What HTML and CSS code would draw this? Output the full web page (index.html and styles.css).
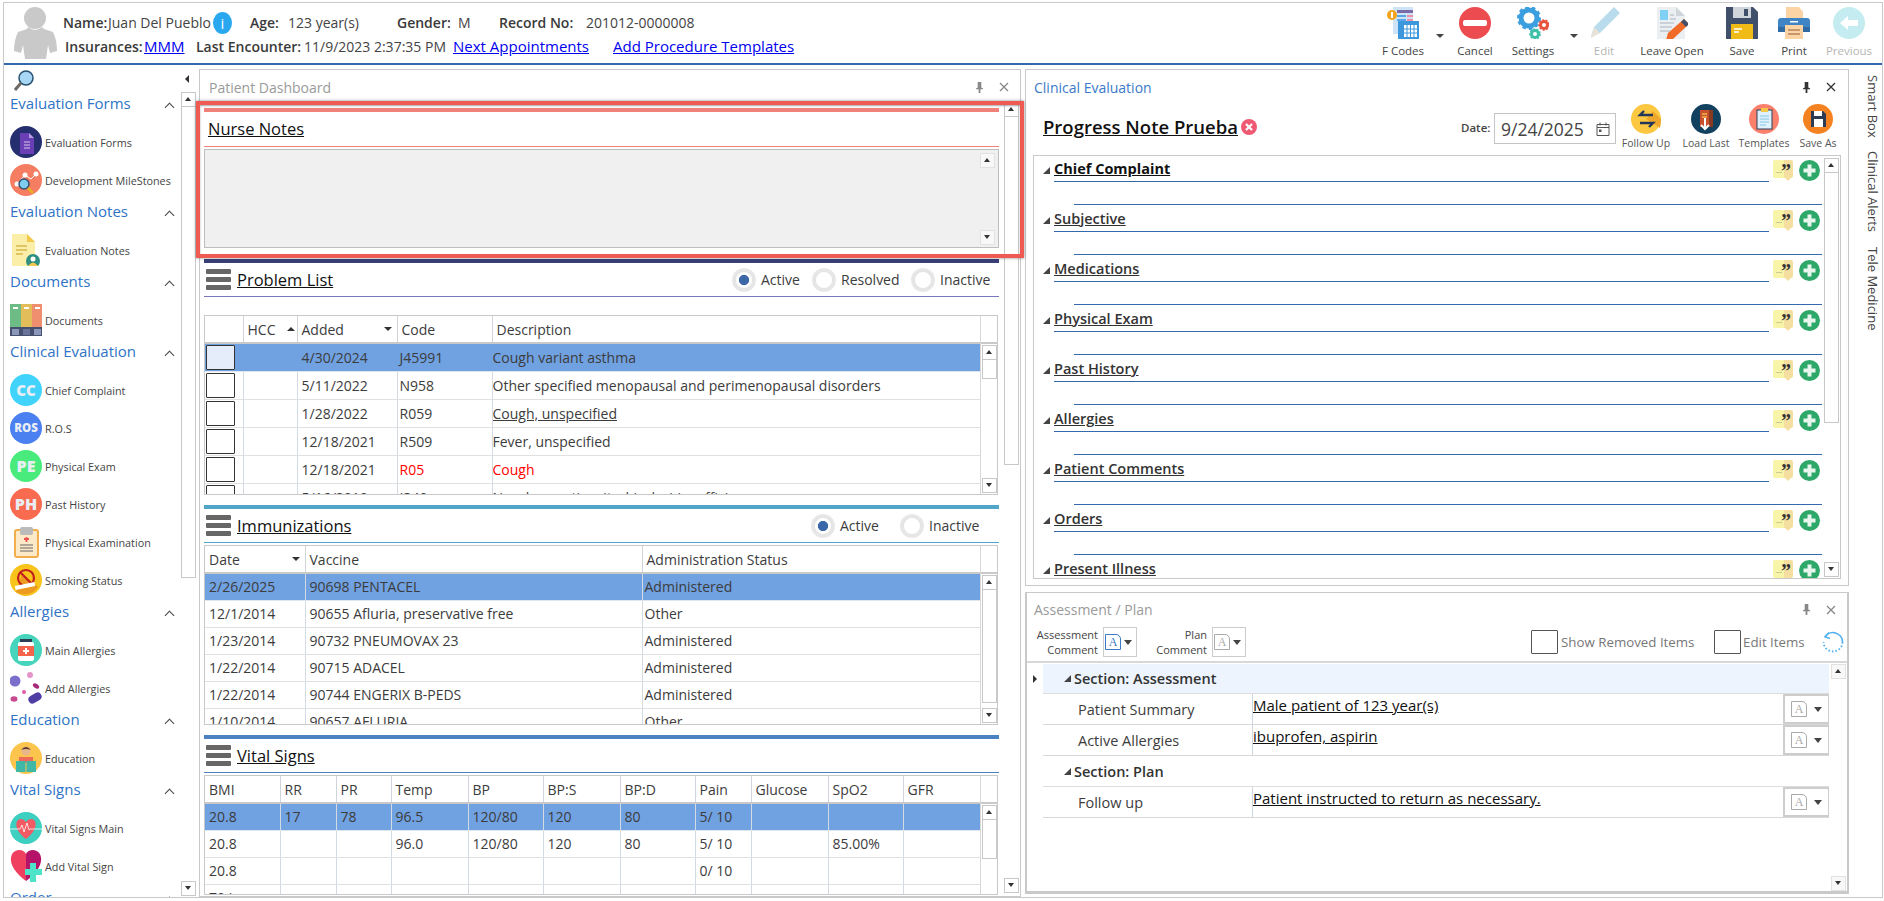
FILE: index.html
```html
<!DOCTYPE html>
<html lang="en">
<head>
<meta charset="utf-8">
<title>Patient Dashboard</title>
<link rel="stylesheet" href="styles.css">
</head>
<body>
<svg class="defs" width="0" height="0">
  <symbol id="i-avatar" viewBox="0 0 44 52"><circle cx="22" cy="11" r="11" fill="#c9c9c9"/><path d="M15 20q7 6 14 0l2 2 9 3q4 8 4 19l-7 2-2-8-2 14H12l-2-14-2 8-7-2q0-11 4-19l9-3z" fill="#c9c9c9"/></symbol>
  <symbol id="i-fcodes" viewBox="0 0 32 32"><rect x="6" y="0" width="20" height="27" fill="#cfe3f7"/><rect x="10" y="3" width="16" height="3" fill="#7a6aa8"/><rect x="10" y="8" width="9" height="2" fill="#5aa6e6"/><rect x="20" y="8" width="6" height="2" fill="#ef8fa8"/><rect x="10" y="12" width="9" height="2" fill="#5aa6e6"/><rect x="20" y="12" width="6" height="2" fill="#ef8fa8"/><rect x="11" y="14" width="21" height="18" fill="#3d97dd"/><rect x="17" y="18" width="13" height="12" fill="#fff"/><path d="M20 18v12M23.500 18v12M27 18v12M17 22h13M17 26h13" stroke="#3d97dd"/><circle cx="5" cy="8" r="5" fill="#f2a51c"/><rect x="4" y="5" width="2" height="6" fill="#fff"/></symbol>
  <symbol id="i-cancel" viewBox="0 0 32 32"><circle cx="16" cy="16" r="16" fill="#ec4b50"/><rect x="4" y="13" width="24" height="6" rx="2" fill="#fff"/></symbol>
  <symbol id="i-settings" viewBox="0 0 32 32"><circle cx="12" cy="11" r="8" fill="none" stroke="#3b9fdf" stroke-width="5"/><circle cx="12" cy="11" r="10.500" fill="none" stroke="#3b9fdf" stroke-width="3" stroke-dasharray="3.500 3"/><circle cx="27" cy="18" r="3.500" fill="none" stroke="#e8543f" stroke-width="3"/><circle cx="27" cy="18" r="5" fill="none" stroke="#e8543f" stroke-width="1.600" stroke-dasharray="2 1.500"/><circle cx="18" cy="27" r="3.500" fill="none" stroke="#3fc0a8" stroke-width="3"/><circle cx="18" cy="27" r="5" fill="none" stroke="#3fc0a8" stroke-width="1.600" stroke-dasharray="2 1.500"/></symbol>
  <symbol id="i-edit" viewBox="0 0 32 32"><path d="M26 0l6 6-20 20-9 3 3-9z" fill="#b9dcec"/><path d="M6 20l6 6-9 5z" fill="#e8e2d8"/></symbol>
  <symbol id="i-leave" viewBox="0 0 32 32"><path d="M1 0h19l9 9v23H1z" fill="#eceff2"/><path d="M20 0l9 9h-9z" fill="#cfd5db"/><rect x="4" y="3" width="8" height="10" fill="#7fd0f5"/><path d="M4 16h14M4 20h12M4 24h10M14 8h4M14 12h6" stroke="#c0c8d0" stroke-width="1.500"/><path d="M28 12l5 5-16 15-7 1 2-7z" fill="#f06a28"/><path d="M28 12l5 5-3 3-5-5z" fill="#44506a"/></symbol>
  <symbol id="i-save" viewBox="0 0 32 32"><path d="M0 0h27l5 5v27H0z" fill="#40506a"/><rect x="7" y="0" width="18" height="11" fill="#cfd5db"/><rect x="18" y="2" width="4" height="7" fill="#40506a"/><rect x="5" y="17" width="22" height="15" fill="#f1bb17"/><path d="M8 22h8M8 25h5" stroke="#fff" stroke-width="1.500"/></symbol>
  <symbol id="i-print" viewBox="0 0 32 32"><path d="M8 0h13l4 5v9H8z" fill="#fbd3a4"/><rect x="0" y="11" width="32" height="14" rx="3" fill="#3f85c5"/><rect x="0" y="20" width="32" height="5" fill="#2f6aa3"/><rect x="7" y="18" width="18" height="14" fill="#fbd3a4"/><path d="M10 23h12M10 27h12" stroke="#b5835a" stroke-width="1.500"/><rect x="12" y="14" width="8" height="1.500" fill="#fff"/></symbol>
  <symbol id="i-prev" viewBox="0 0 32 32"><circle cx="16" cy="16" r="16" fill="#c5ecf0"/><path d="M7 16l8-7v4h10v6H15v4z" fill="#fff"/></symbol>
  <symbol id="i-forms" viewBox="0 0 32 32"><circle cx="16" cy="16" r="16" fill="#252e6e"/><path d="M10 7h9l5 5v16H10z" fill="#6a3fb5"/><path d="M19 7l5 5h-5z" fill="#b79be2"/><path d="M14 16h6M14 19h6M14 22h6" stroke="#d7c9f0"/></symbol>
  <symbol id="i-miles" viewBox="0 0 32 32"><circle cx="16" cy="16" r="16" fill="#f47d62"/><path d="M7 20l8-9 6 4 5-5" stroke="#fff" fill="none"/><circle cx="7" cy="20" r="2.500" fill="#fff"/><circle cx="15" cy="11" r="2.500" fill="#fff"/><circle cx="26" cy="10" r="2.500" fill="#fff"/><circle cx="14" cy="20" r="5" fill="#7ecdf0" stroke="#34506e" stroke-width="1.500"/><path d="M18 24l5 5" stroke="#e8b020" stroke-width="2.500"/></symbol>
  <symbol id="i-note" viewBox="0 0 32 32"><path d="M2 0h15l8 8v24H2z" fill="#fbeea8"/><path d="M17 0l8 8h-8z" fill="#f2c94c"/><path d="M6 12h11M6 16h11M6 20h7" stroke="#d8b84c" stroke-width="1.500"/><circle cx="23" cy="27" r="7" fill="#2f8f83"/><circle cx="23" cy="25" r="2.500" fill="#fff"/><path d="M18 32q5-7 10 0z" fill="#f2c94c"/></symbol>
  <symbol id="i-docs" viewBox="0 0 32 32"><rect x="0" width="11" height="32" fill="#6dbb85"/><rect x="11" width="11" height="32" fill="#e2bd5a"/><rect x="22" width="10" height="32" fill="#ef8f70"/><rect y="23" width="32" height="9" fill="#46506e"/><rect x="2" y="25" width="7" height="6" fill="#8a96ba"/><rect x="13" y="25" width="7" height="6" fill="#68749a"/><rect x="24" y="25" width="7" height="6" fill="#8a96ba"/><path d="M3 4h5M14 4h5M25 4h5" stroke="#fff" stroke-width="2"/></symbol>
  <symbol id="i-clip" viewBox="0 0 32 32"><rect x="5" y="4" width="23" height="27" rx="2" fill="#fce9c8" stroke="#f2ae4c" stroke-width="2"/><rect x="10" y="1" width="13" height="8" rx="2" fill="#bbb"/><path d="M14 13h5M16.500 11v5" stroke="#ee5050" stroke-width="1.800"/><path d="M10 19h13M10 22h13M10 25h13" stroke="#666" stroke-width="1.200"/></symbol>
  <symbol id="i-smoke" viewBox="0 0 32 32"><circle cx="16" cy="16" r="16" fill="#f8c41c"/><path d="M6 28a16 16 0 0 0 22-5L12 10z" fill="#ec9a20"/><circle cx="16" cy="14" r="8" fill="none" stroke="#c21e1e" stroke-width="2.200"/><path d="M10 8l12 12" stroke="#c21e1e" stroke-width="2.200"/><rect x="5" y="20" width="20" height="4" fill="#fff" transform="rotate(-12 15 22)"/></symbol>
  <symbol id="i-bottle" viewBox="0 0 32 32"><circle cx="16" cy="16" r="16" fill="#46d4bc"/><rect x="10" y="5" width="12" height="3" fill="#2b3d52"/><rect x="8" y="8" width="16" height="19" rx="2" fill="#fff"/><rect x="8" y="12" width="16" height="10" fill="#f4634c"/><path d="M13 17h6M16 14v6" stroke="#fff" stroke-width="2"/></symbol>
  <symbol id="i-pills" viewBox="0 0 32 32"><circle cx="5" cy="9" r="5.500" fill="#7a70cc"/><circle cx="20" cy="3" r="3" fill="#e596c8"/><ellipse cx="26" cy="14" rx="3.500" ry="2.200" fill="#a82a7a" transform="rotate(35 26 14)"/><circle cx="14" cy="20" r="2" fill="#e05aa8"/><ellipse cx="4" cy="27" rx="3.500" ry="2.800" fill="#c84a90"/><rect x="18" y="22" width="14" height="8" rx="4" fill="#4f3fa5" transform="rotate(-30 25 26)"/></symbol>
  <symbol id="i-edu" viewBox="0 0 32 32"><circle cx="16" cy="16" r="16" fill="#fbc44c"/><circle cx="16" cy="9" r="4.500" fill="#e8b58c"/><path d="M11 8q5-6 10 0-5-2-10 0z" fill="#5a3a28"/><path d="M9 15h14v6H9z" fill="#ee6a58"/><rect x="6" y="19" width="9.500" height="11" fill="#3fb8a8"/><rect x="16.500" y="19" width="9.500" height="11" fill="#3fb8a8"/></symbol>
  <symbol id="i-vital" viewBox="0 0 32 32"><circle cx="16" cy="16" r="16" fill="#3dcfc0"/><path d="M16 27C3 17 5 7 11 7q3 0 5 3 2-3 5-3c6 0 8 10-5 20z" fill="#f25a64"/><path d="M0 17h10l2-4 2 7 3-9 2 7 1-1h12" stroke="#fff" stroke-width=".8" fill="none"/></symbol>
  <symbol id="i-heart" viewBox="0 0 32 32"><path d="M16 31C-6 15 0 0 9 0q5 0 7 4v27z" fill="#f0405f"/><path d="M16 31C38 15 32 0 23 0q-5 0-7 4z" fill="#b5126a"/><rect x="20" y="13" width="6" height="19" fill="#4fe3c9"/><rect x="15" y="19" width="17" height="6" fill="#4fe3c9"/></symbol>
  <symbol id="i-lens" viewBox="0 0 20 22"><circle cx="12" cy="8" r="7" fill="#a8d6f5" stroke="#26506e" stroke-width="1.500"/><path d="M7 13l-6 7" stroke="#6e6a64" stroke-width="3"/></symbol>
  <symbol id="i-menu" viewBox="0 0 25 21"><rect width="25" height="5" rx="1" fill="#666"/><rect y="8" width="25" height="5" rx="1" fill="#666"/><rect y="16" width="25" height="5" rx="1" fill="#666"/></symbol>
  <symbol id="i-pin" viewBox="0 0 10 12"><path d="M3 0h4v6l2 1v1H6v4H4V8H1V7l2-1z" fill="currentColor"/></symbol>
  <symbol id="i-close" viewBox="0 0 10 10"><path d="M1 1l8 8M9 1L1 9" stroke="currentColor" stroke-width="1.300"/></symbol>
  <symbol id="i-x" viewBox="0 0 16 16"><circle cx="8" cy="8" r="8" fill="#ef5a72"/><path d="M5 5l6 6M11 5l-6 6" stroke="#fff" stroke-width="2.200"/></symbol>
  <symbol id="i-cal" viewBox="0 0 14 14"><path d="M1 2.500h12v11H1zM1 5.500h12M4 .5v3M10 .5v3" stroke="#555" fill="none"/><rect x="3" y="7.500" width="2.500" height="2.500" fill="#555"/></symbol>
  <symbol id="i-follow" viewBox="0 0 30 30"><circle cx="15" cy="15" r="15" fill="#fcc741"/><path d="M15 15l14 9q1-4 1-9l-8-8z" fill="#f0a82c"/><path d="M22 11H9l4-4M9 19h13l-4 4" stroke="#24395a" stroke-width="2.400" fill="none"/></symbol>
  <symbol id="i-load" viewBox="0 0 30 30"><circle cx="15" cy="15" r="15" fill="#12405f"/><rect x="9" y="6" width="13" height="17" fill="#c8502c"/><rect x="18" y="6" width="4" height="17" fill="#8a3a20"/><path d="M11 10h5M11 13h5" stroke="#f2b84c" stroke-width="1.500"/><path d="M14 14v11M10 21l4 4 4-4" stroke="#fff" stroke-width="2" fill="none"/></symbol>
  <symbol id="i-templates" viewBox="0 0 30 30"><circle cx="15" cy="15" r="15" fill="#fa806c"/><rect x="8" y="6" width="15" height="19" fill="#dff1fb" stroke="#2b3f5a"/><rect x="12" y="4" width="7" height="4" fill="#f6c64a"/><path d="M11 12h9M11 15h9M11 18h9M11 21h6" stroke="#8ac4e8"/></symbol>
  <symbol id="i-saveas" viewBox="0 0 30 30"><circle cx="15" cy="15" r="15" fill="#f58220"/><path d="M8 7h12l3 3v13H8z" fill="#2b3b55"/><rect x="11" y="7" width="8" height="5" fill="#fff"/><rect x="11" y="15" width="9" height="8" fill="#fff"/></symbol>
  <symbol id="i-plus" viewBox="0 0 21 21"><circle cx="10.500" cy="10.500" r="10.500" fill="#2da868"/><path d="M10.500 4.500v12M4.500 10.500h12" stroke="#e8f6ee" stroke-width="4"/></symbol>
  <symbol id="i-refresh" viewBox="0 0 22 22"><path d="M3 6A9.500 9.500 0 0 1 20.500 11" fill="none" stroke="#4fb0f0" stroke-width="1.600"/><path d="M20.500 11A9.500 9.500 0 0 1 1.500 11" fill="none" stroke="#4fb0f0" stroke-width="1.800" stroke-dasharray="1.600 2"/><path d="M7 1.500L3 6l5 1.500" fill="none" stroke="#4fb0f0" stroke-width="1.400"/></symbol>
</svg>

<div class="app">
  <header class="topbar">
    <svg class="avatar"><use href="#i-avatar"/></svg>
    <div class="patient">
      <div class="pline pline-one">
        <div class="cell c-name"><b class="lb lb-name">Name:</b><span>Juan Del Pueblo</span><span class="info">i</span></div>
        <div class="cell c-age"><b class="lb lb-age">Age:</b><span>123 year(s)</span></div>
        <div class="cell c-gender"><b class="lb lb-gender">Gender:</b><span>M</span></div>
        <div class="cell c-record"><b class="lb lb-record">Record No:</b><span>201012-0000008</span></div>
      </div>
      <div class="pline">
        <div class="cell c-ins"><b class="lb lb-ins">Insurances:</b><a href="#">MMM</a></div>
        <div class="cell c-last"><b class="lb lb-last">Last Encounter:</b><span>11/9/2023 2:37:35 PM</span></div>
        <div class="cell c-next"><a href="#">Next Appointments</a></div>
        <div class="cell"><a href="#">Add Procedure Templates</a></div>
      </div>
    </div>
    <nav class="tools">
      <div class="tool w56"><svg class="ti"><use href="#i-fcodes"/></svg><span>F Codes</span></div>
      <div class="tcaret w18"></div>
      <div class="tool w52"><svg class="ti"><use href="#i-cancel"/></svg><span>Cancel</span></div>
      <div class="tool w64"><svg class="ti"><use href="#i-settings"/></svg><span>Settings</span></div>
      <div class="tcaret w16"></div>
      <div class="tool w46 off"><svg class="ti"><use href="#i-edit"/></svg><span>Edit</span></div>
      <div class="tool w90"><svg class="ti"><use href="#i-leave"/></svg><span>Leave Open</span></div>
      <div class="tool w50"><svg class="ti"><use href="#i-save"/></svg><span>Save</span></div>
      <div class="tool w54"><svg class="ti"><use href="#i-print"/></svg><span>Print</span></div>
      <div class="tool w56 off"><svg class="ti"><use href="#i-prev"/></svg><span>Previous</span></div>
    </nav>
  </header>

  <main class="workspace">
    <aside class="sidebar">
      <div class="side-list">
        <svg class="lens"><use href="#i-lens"/></svg>
        <div class="s-title">Evaluation Forms</div>
        <div class="s-item"><svg class="s-ic"><use href="#i-forms"/></svg>Evaluation Forms</div>
        <div class="s-item"><svg class="s-ic"><use href="#i-miles"/></svg>Development MileStones</div>
        <div class="s-title">Evaluation Notes</div>
        <div class="s-item"><svg class="s-ic"><use href="#i-note"/></svg>Evaluation Notes</div>
        <div class="s-title">Documents</div>
        <div class="s-item"><svg class="s-ic"><use href="#i-docs"/></svg>Documents</div>
        <div class="s-title">Clinical Evaluation</div>
        <div class="s-item"><span class="badge b-cc">CC</span>Chief Complaint</div>
        <div class="s-item"><span class="badge b-ros">ROS</span>R.O.S</div>
        <div class="s-item"><span class="badge b-pe">PE</span>Physical Exam</div>
        <div class="s-item"><span class="badge b-ph">PH</span>Past History</div>
        <div class="s-item"><svg class="s-ic"><use href="#i-clip"/></svg>Physical Examination</div>
        <div class="s-item"><svg class="s-ic"><use href="#i-smoke"/></svg>Smoking Status</div>
        <div class="s-title">Allergies</div>
        <div class="s-item"><svg class="s-ic"><use href="#i-bottle"/></svg>Main Allergies</div>
        <div class="s-item"><svg class="s-ic"><use href="#i-pills"/></svg>Add Allergies</div>
        <div class="s-title">Education</div>
        <div class="s-item"><svg class="s-ic"><use href="#i-edu"/></svg>Education</div>
        <div class="s-title">Vital Signs</div>
        <div class="s-item"><svg class="s-ic"><use href="#i-vital"/></svg>Vital Signs Main</div>
        <div class="s-item"><svg class="s-ic"><use href="#i-heart"/></svg>Add Vital Sign</div>
        <div class="s-title">Order</div>
      </div>
      <div class="side-rail">
        <div class="collapse"></div>
        <div class="sb sb-side"><div class="sb-btn up"></div><div class="sb-thumb th-side"></div><div class="sb-gap"></div><div class="sb-btn down"></div></div>
      </div>
    </aside>

    <section class="panel dash">
      <div class="p-head muted"><span class="p-title">Patient Dashboard</span><svg class="pin"><use href="#i-pin"/></svg><svg class="close"><use href="#i-close"/></svg></div>
      <div class="dash-body">
        <div class="dash-content">
          <div class="nurse">
            <div class="nurse-bar"></div>
            <div class="nurse-head"><u>Nurse Notes</u></div>
            <div class="nurse-box"><div class="sb sb-nurse"><div class="sb-btn up"></div><div class="sb-gap"></div><div class="sb-btn down"></div></div></div>
          </div>

          <div class="bar bar-navy"></div>
          <div class="sec-head line-purple">
            <svg class="menu"><use href="#i-menu"/></svg><u class="sec-name">Problem List</u>
            <div class="radios">
              <div class="radio-item ri80"><i class="radio on"></i>Active</div>
              <div class="radio-item ri99"><i class="radio"></i>Resolved</div>
              <div class="radio-item ri88"><i class="radio"></i>Inactive</div>
            </div>
          </div>
          <div class="grid g-problem">
            <div class="g-main">
              <table class="dt rows28">
                <colgroup><col class="w38"><col class="w54"><col class="w100"><col class="w95"><col></colgroup>
                <thead><tr><th></th><th><span class="th-sort">HCC<i class="tri-up"></i></span></th><th><span class="th-sort wide">Added<i class="tri-down"></i></span></th><th>Code</th><th>Description</th></tr></thead>
                <tbody>
                  <tr class="sel"><td class="chk"><i class="box focus"></i></td><td></td><td>4/30/2024</td><td class="tight">J45991</td><td class="flush">Cough variant asthma</td></tr>
                  <tr><td class="chk"><i class="box"></i></td><td></td><td>5/11/2022</td><td class="tight">N958</td><td class="flush">Other specified menopausal and perimenopausal disorders</td></tr>
                  <tr><td class="chk"><i class="box"></i></td><td></td><td>1/28/2022</td><td class="tight">R059</td><td class="flush"><u>Cough, unspecified</u></td></tr>
                  <tr><td class="chk"><i class="box"></i></td><td></td><td>12/18/2021</td><td class="tight">R509</td><td class="flush">Fever, unspecified</td></tr>
                  <tr class="red"><td class="chk"><i class="box"></i></td><td></td><td class="ink">12/18/2021</td><td class="tight">R05</td><td class="flush">Cough</td></tr>
                  <tr><td class="chk"><i class="box"></i></td><td></td><td>5/16/2019</td><td class="tight">I340</td><td class="flush">Nonrheumatic mitral (valve) insufficiency</td></tr>
                </tbody>
              </table>
            </div>
            <div class="g-side"><div class="sb sb-grid"><div class="sb-btn up"></div><div class="sb-thumb th-problem"></div><div class="sb-gap"></div><div class="sb-btn down"></div></div></div>
          </div>

          <div class="bar bar-teal"></div>
          <div class="sec-head line-teal">
            <svg class="menu"><use href="#i-menu"/></svg><u class="sec-name">Immunizations</u>
            <div class="radios">
              <div class="radio-item ri89"><i class="radio on"></i>Active</div>
              <div class="radio-item ri99"><i class="radio"></i>Inactive</div>
            </div>
          </div>
          <div class="grid g-imm">
            <div class="g-main">
              <table class="dt rows27">
                <colgroup><col class="w100"><col class="w337"><col></colgroup>
                <thead><tr><th><span class="th-sort wide">Date<i class="tri-down"></i></span></th><th>Vaccine</th><th>Administration Status</th></tr></thead>
                <tbody>
                  <tr class="sel"><td>2/26/2025</td><td>90698 PENTACEL</td><td class="tight">Administered</td></tr>
                  <tr><td>12/1/2014</td><td>90655 Afluria, preservative free</td><td class="tight">Other</td></tr>
                  <tr><td>1/23/2014</td><td>90732 PNEUMOVAX 23</td><td class="tight">Administered</td></tr>
                  <tr><td>1/22/2014</td><td>90715 ADACEL</td><td class="tight">Administered</td></tr>
                  <tr><td>1/22/2014</td><td>90744 ENGERIX B-PEDS</td><td class="tight">Administered</td></tr>
                  <tr><td>1/10/2014</td><td>90657 AFLURIA</td><td class="tight">Other</td></tr>
                </tbody>
              </table>
            </div>
            <div class="g-side"><div class="sb sb-grid"><div class="sb-btn up"></div><div class="sb-thumb th-imm"></div><div class="sb-gap"></div><div class="sb-btn down"></div></div></div>
          </div>

          <div class="bar bar-blue"></div>
          <div class="sec-head line-blue">
            <svg class="menu"><use href="#i-menu"/></svg><u class="sec-name">Vital Signs</u>
          </div>
          <div class="grid g-vital">
            <div class="g-main">
              <table class="dt rows27">
                <colgroup><col class="w75"><col class="w56"><col class="w55"><col class="w77"><col class="w75"><col class="w77"><col class="w75"><col class="w56"><col class="w77"><col class="w75"><col></colgroup>
                <thead><tr><th>BMI</th><th>RR</th><th>PR</th><th>Temp</th><th>BP</th><th>BP:S</th><th>BP:D</th><th>Pain</th><th>Glucose</th><th>SpO2</th><th>GFR</th></tr></thead>
                <tbody>
                  <tr class="sel"><td>20.8</td><td>17</td><td>78</td><td>96.5</td><td>120/80</td><td>120</td><td>80</td><td>5/ 10</td><td></td><td></td><td></td></tr>
                  <tr><td>20.8</td><td></td><td></td><td>96.0</td><td>120/80</td><td>120</td><td>80</td><td>5/ 10</td><td></td><td>85.00%</td><td></td></tr>
                  <tr><td>20.8</td><td></td><td></td><td></td><td></td><td></td><td></td><td>0/ 10</td><td></td><td></td><td></td></tr>
                  <tr><td>70 in</td><td></td><td></td><td></td><td></td><td></td><td></td><td></td><td></td><td></td><td></td></tr>
                </tbody>
              </table>
            </div>
            <div class="g-side g-side-open"><div class="sb sb-vital"><div class="sb-btn up"></div><div class="sb-thumb th-vital"></div></div></div>
          </div>
        </div>
        <div class="dash-rail"><div class="sb sb-dash"><div class="sb-btn up"></div><div class="sb-thumb th-dash"></div><div class="sb-gap"></div><div class="sb-btn down"></div></div></div>
      </div>
    </section>

    <div class="right-col">
      <section class="panel clinical">
        <div class="p-head"><span class="p-title blue">Clinical Evaluation</span><svg class="pin"><use href="#i-pin"/></svg><svg class="close"><use href="#i-close"/></svg></div>
        <div class="note-row">
          <u class="note-name">Progress Note Prueba</u><svg class="note-x"><use href="#i-x"/></svg>
          <b class="date-lb">Date:</b>
          <div class="date-box"><span>9/24/2025</span><svg class="cal"><use href="#i-cal"/></svg></div>
          <div class="nbtn n1"><svg class="ni"><use href="#i-follow"/></svg><span>Follow Up</span></div>
          <div class="nbtn n2"><svg class="ni"><use href="#i-load"/></svg><span>Load Last</span></div>
          <div class="nbtn n3"><svg class="ni"><use href="#i-templates"/></svg><span>Templates</span></div>
          <div class="nbtn n4"><svg class="ni"><use href="#i-saveas"/></svg><span>Save As</span></div>
        </div>
        <div class="eval-list">
          <div class="eval-items">
            <div class="ev"><div class="ev-head"><i class="tri-open"></i><div class="ev-name strong"><u>Chief Complaint</u></div><span class="q"><i>...</i>”</span><svg class="plus"><use href="#i-plus"/></svg></div><div class="ev-body"></div></div>
            <div class="ev"><div class="ev-head"><i class="tri-open"></i><div class="ev-name"><u>Subjective</u></div><span class="q"><i>...</i>”</span><svg class="plus"><use href="#i-plus"/></svg></div><div class="ev-body"></div></div>
            <div class="ev"><div class="ev-head"><i class="tri-open"></i><div class="ev-name"><u>Medications</u></div><span class="q"><i>...</i>”</span><svg class="plus"><use href="#i-plus"/></svg></div><div class="ev-body"></div></div>
            <div class="ev"><div class="ev-head"><i class="tri-open"></i><div class="ev-name"><u>Physical Exam</u></div><span class="q"><i>...</i>”</span><svg class="plus"><use href="#i-plus"/></svg></div><div class="ev-body"></div></div>
            <div class="ev"><div class="ev-head"><i class="tri-open"></i><div class="ev-name"><u>Past History</u></div><span class="q"><i>...</i>”</span><svg class="plus"><use href="#i-plus"/></svg></div><div class="ev-body"></div></div>
            <div class="ev"><div class="ev-head"><i class="tri-open"></i><div class="ev-name"><u>Allergies</u></div><span class="q"><i>...</i>”</span><svg class="plus"><use href="#i-plus"/></svg></div><div class="ev-body"></div></div>
            <div class="ev"><div class="ev-head"><i class="tri-open"></i><div class="ev-name"><u>Patient Comments</u></div><span class="q"><i>...</i>”</span><svg class="plus"><use href="#i-plus"/></svg></div><div class="ev-body"></div></div>
            <div class="ev"><div class="ev-head"><i class="tri-open"></i><div class="ev-name"><u>Orders</u></div><span class="q"><i>...</i>”</span><svg class="plus"><use href="#i-plus"/></svg></div><div class="ev-body"></div></div>
            <div class="ev"><div class="ev-head"><i class="tri-open"></i><div class="ev-name"><u>Present Illness</u></div><span class="q"><i>...</i>”</span><svg class="plus"><use href="#i-plus"/></svg></div><div class="ev-body"></div></div>
          </div>
          <div class="sb sb-eval"><div class="sb-btn up"></div><div class="sb-thumb th-eval"></div><div class="sb-gap"></div><div class="sb-btn down"></div></div>
        </div>
      </section>

      <section class="panel assess">
        <div class="p-head muted"><span class="p-title">Assessment / Plan</span><svg class="pin"><use href="#i-pin"/></svg><svg class="close"><use href="#i-close"/></svg></div>
        <div class="a-tools">
          <div class="a-lb lb1">Assessment<br>Comment</div>
          <div class="a-drop active"><span class="a-ic">A</span><i class="caret"></i></div>
          <div class="a-lb lb2">Plan<br>Comment</div>
          <div class="a-drop"><span class="a-ic">A</span><i class="caret"></i></div>
          <i class="box big b1"></i><span class="a-chk l1">Show Removed Items</span>
          <i class="box big"></i><span class="a-chk l2">Edit Items</span>
          <svg class="refresh"><use href="#i-refresh"/></svg>
        </div>
        <div class="a-grid">
          <div class="a-exp"><i class="tri-right"></i></div>
          <div class="a-rows">
            <div class="a-sec tint"><i class="tri-open"></i>Section: Assessment</div>
            <div class="a-row inset"><div class="a-name">Patient Summary</div><div class="a-val"><u>Male patient of 123 year(s)</u></div><div class="a-cmt"><span class="a-ic">A</span><i class="caret"></i></div></div>
            <div class="a-row"><div class="a-name">Active Allergies</div><div class="a-val"><u>ibuprofen, aspirin</u></div><div class="a-cmt"><span class="a-ic">A</span><i class="caret"></i></div></div>
            <div class="a-sec"><i class="tri-open"></i>Section: Plan</div>
            <div class="a-row"><div class="a-name">Follow up</div><div class="a-val"><u>Patient instructed to return as necessary.</u></div><div class="a-cmt"><span class="a-ic">A</span><i class="caret"></i></div></div>
          </div>
          <div class="sb sb-assess"><div class="sb-btn up"></div><div class="sb-gap"></div><div class="sb-btn down"></div></div>
        </div>
      </section>
    </div>

    <div class="vtabs">
      <div class="vtab t1">Smart Box</div>
      <div class="vtab t2">Clinical Alerts</div>
      <div class="vtab">Tele Medicine</div>
    </div>
  </main>
</div>
</body>
</html>
```

FILE: styles.css
```css
* { box-sizing: border-box; }
html, body { margin: 0; padding: 0; background: #fff; }
body { font-family: "Open Sans", "Liberation Sans", sans-serif; color: #3c3c3c; font-size: 14px; overflow: hidden; }
.defs { position: absolute; }
svg { display: block; flex: none; }

.app { width: 1880px; height: 896px; margin: 2px 0 0 3px; border: 1px solid #c9c9c9; display: flex; flex-direction: column; overflow: hidden; }

/* header */
.topbar { height: 62px; flex: none; display: flex; border-bottom: 2px solid #3569ad; }
.avatar { width: 44px; height: 52px; margin: 4px 0 0 9px; }
.patient { margin-left: 6px; padding-top: 8px; font-size: 14px; }
.pline { display: flex; align-items: center; height: 24px; white-space: nowrap; color: #444; }
.pline-one { height: 23px; }
.cell { display: flex; align-items: center; }
.lb { font-weight: 600; color: #3a3a3a; }
.lb-name { width: 45px; }
.lb-age { width: 38px; }
.lb-gender { width: 61px; }
.lb-record { width: 87px; }
.lb-ins { width: 79px; margin-left: 2px; }
.lb-last { width: 108px; }
.c-name { width: 187px; }
.c-age { width: 147px; }
.c-gender { width: 102px; }
.c-ins { width: 133px; }
.c-last { width: 257px; }
.c-next { width: 160px; }
.pline a { color: #0000ee; text-decoration: underline; font-size: 15px; }
.info { width: 19px; height: 22px; border-radius: 50%; background: #2aa8ef; color: #fff; font-size: 15px; line-height: 22px; text-align: center; margin-left: 2px; }

.tools { margin-left: auto; display: flex; padding-right: 5px; }
.tool { display: flex; flex-direction: column; align-items: center; padding-top: 4px; font-size: 11.500px; color: #444; white-space: nowrap; }
.tool span { margin-top: 4px; line-height: 16px; }
.tool.off { color: #b5b5b5; }
.ti { width: 32px; height: 32px; }
.tcaret { position: relative; }
.tcaret::after { content: ""; position: absolute; left: 5px; top: 31px; border: 4px solid transparent; border-top: 4px solid #444; }
.w18 { width: 18px; } .w16 { width: 16px; } .w38 { width: 38px; } .w46 { width: 46px; } .w50 { width: 50px; }
.w52 { width: 52px; } .w54 { width: 54px; } .w55 { width: 55px; } .w56 { width: 56px; } .w64 { width: 64px; }
.w75 { width: 75px; } .w77 { width: 77px; } .w90 { width: 90px; } .w95 { width: 95px; } .w100 { width: 100px; } .w337 { width: 337px; }

/* layout */
.workspace { flex: 1; display: flex; min-height: 0; }

/* sidebar */
.sidebar { width: 195px; flex: none; display: flex; }
.side-list { width: 177px; height: 100%; overflow: hidden; padding: 5px 0 0 6px; flex: none; }
.lens { width: 20px; height: 22px; margin-left: 4px; margin-bottom: 2px; }
.s-title { height: 32px; line-height: 18px; font-size: 15px; color: #2e73c6; position: relative; white-space: nowrap; }
.s-title::after { content: ""; position: absolute; left: 156px; top: 10px; width: 6px; height: 6px; border-left: 1.500px solid #444; border-top: 1.500px solid #444; transform: rotate(45deg); }
.s-item { height: 38px; display: flex; gap: 3px; font-size: 10.800px; line-height: 34px; white-space: nowrap; color: #444; }
.s-ic { width: 32px; height: 32px; }
.badge { width: 32px; height: 32px; border-radius: 50%; flex: none; text-align: center; color: #e8eef4; font-weight: 800; line-height: 32px; font-size: 16px; }
.b-cc { background: #41d3fb; font-size: 15px; }
.b-ros { background: #4a80f0; font-size: 11.500px; }
.b-pe { background: #49ec7c; }
.b-ph { background: #f96b50; }
.side-rail { width: 18px; display: flex; flex-direction: column; }
.collapse { height: 27px; position: relative; flex: none; }
.collapse::after { content: ""; position: absolute; left: 4px; top: 10px; border: 4px solid transparent; border-right: 4px solid #333; border-left-width: 0; }

/* scrollbars */
.sb { width: 15px; display: flex; flex-direction: column; flex: none; }
.sb-btn { height: 15px; flex: none; border: 1px solid #c8c8c8; background: #fff; position: relative; }
.sb-btn::after { content: ""; position: absolute; left: 3px; border: 3.500px solid transparent; }
.sb-btn.up::after { top: 1px; border-bottom: 4px solid #333; }
.sb-btn.down::after { top: 4px; border-top: 4px solid #333; }
.sb-thumb { border: 1px solid #c8c8c8; border-top: 0; flex: none; background: #fff; }
.sb-gap { flex: 1; }
.sb-side { height: 804px; }
.th-side { height: 471px; }
.sb-nurse { height: 92px; margin: 3px 3px 0 auto; }
.sb-nurse .sb-btn, .sb-assess .sb-btn { border-color: #e2e2e2; background: #f8f8f8; }
.sb-grid { height: 148px; }
.th-problem { height: 19px; }
.th-imm { height: 113px; }
.th-vital { height: 39px; }
.th-eval { height: 250px; }

/* panels */
.panel { border: 1px solid #c9c9c9; background: #fff; }
.p-head { height: 31px; display: flex; align-items: center; padding: 3px 12px 0 8px; color: #333; }
.p-head.muted { color: #888; }
.p-title { font-size: 14px; color: #9a9a9a; margin-right: auto; }
.p-title.blue { color: #3a7ac8; }
.pin { width: 9px; height: 11px; margin-right: 15px; }
.close { width: 10px; height: 10px; }

.dash { width: 822px; height: 828px; margin-top: 4px; flex: none; display: flex; flex-direction: column; }
.dash .p-head { padding: 3px 11px 0 9px; }
.dash-body { flex: 1; display: flex; padding-left: 4px; min-height: 0; }
.dash-content { width: 795px; flex: none; }
.dash-rail { margin-left: 5px; padding-top: 1px; }
.sb-dash { height: 791px; }
.th-dash { height: 348px; }

.nurse { position: relative; z-index: 2; height: 157px; margin: 0 -25px 1px -8px; border: 4px solid #ef5b52; padding: 0 21px 0 4px; box-shadow: 0 0 3px rgba(0, 0, 0, .45), inset 0 1px 2px rgba(0, 0, 0, .35); }
.nurse-bar { height: 4px; margin-top: 3px; background: #f0807a; }
.nurse-head { height: 35px; line-height: 33px; padding-left: 4px; font-size: 16.500px; color: #111; border-bottom: 1px solid #f0807a; }
.nurse-box { height: 99px; margin-top: 2px; background: #f0f0f0; border: 1px solid #bdbdbd; display: flex; }

.bar { height: 4px; }
.bar-navy { background: #3a3f78; }
.bar-teal { background: #51a5c9; margin-top: 10px; }
.bar-blue { background: #4d82c2; margin-top: 10px; }
.sec-head { height: 34px; display: flex; align-items: center; border-bottom: 1px solid; padding-left: 2px; font-size: 14px; white-space: nowrap; }
.line-purple { border-color: #7a78bb; }
.line-teal { border-color: #51a5c9; }
.line-blue { border-color: #4d82c2; }
.menu { width: 25px; height: 21px; }
.sec-name { margin-left: 6px; font-size: 16.500px; color: #111; }
.radios { margin-left: auto; display: flex; }
.radio-item { display: flex; align-items: center; gap: 5px; }
.ri80 { width: 80px; } .ri88 { width: 88px; } .ri89 { width: 89px; } .ri99 { width: 99px; }
.radio { width: 24px; height: 24px; border-radius: 50%; background: radial-gradient(circle, #fff 0 44%, #e4e4e4 50%, #efefef 100%); position: relative; flex: none; }
.radio.on { background: radial-gradient(circle, #3a68a8 0 28%, #fff 32% 44%, #e4e4e4 50%, #efefef 100%); }

/* grids */
.grid { display: flex; width: 794px; height: 180px; border: 1px solid #c9c9c9; overflow: hidden; }
.g-problem { margin-top: 18px; }
.g-imm { margin-top: 2px; }
.g-vital { margin-top: 2px; height: 120px; }
.g-main { width: 775px; flex: none; overflow: hidden; height: 100%; }
.g-side { flex: 1; border-left: 1px solid #d8d8d8; padding: 29px 0 0 1px; position: relative; }
.g-side::before { content: ""; position: absolute; left: 0; right: 0; top: 26px; border-top: 2px solid #c9c9c9; }
.dt { width: 775px; table-layout: fixed; border-collapse: collapse; font-size: 14px; color: #3c3c3c; white-space: nowrap; }
.dt th { font-weight: 400; text-align: left; height: 27px; padding: 0 0 0 4px; border-right: 1px solid #cfd4da; border-bottom: 2px solid #c9c9c9; overflow: hidden; }
.dt th:last-child { border-right: 0; }
.dt td { padding: 0 0 0 4px; border-right: 1px solid #d4dae2; border-bottom: 1px solid #e0e0e0; overflow: hidden; }
.dt td.tight { padding-left: 2px; }
.dt td.flush { padding-left: 0; }
.dt td:last-child { border-right: 0; }
.rows28 td { height: 28px; }
.rows27 td { height: 27px; }
.dt td.chk { padding: 0 0 0 1px; }
.dt tr.sel td { background: #70a1e1; border-bottom-color: #dfe6ee; }
.rows28 tr.sel td { border-right-color: #70a1e1; }
.dt tr.red td { color: #f00; }
.dt tr.red td.ink { color: #3c3c3c; }
.box { display: block; width: 29px; height: 25px; border: 1px solid #333; background: #fff; border-radius: 1px; }
.box.focus { background: #e4edf9; }
.th-sort { display: flex; align-items: center; justify-content: space-between; padding-right: 2px; }
.th-sort.wide { padding-right: 5px; }
.tri-up { border: 4px solid transparent; border-bottom: 4px solid #333; border-top-width: 0; }
.tri-down { border: 4px solid transparent; border-top: 4px solid #333; border-bottom-width: 0; }
.g-side-open { overflow: visible; }
.sb-vital { height: 100px; }

/* right */
.right-col { width: 824px; margin-left: 4px; flex: none; display: flex; flex-direction: column; }
.clinical { height: 517px; margin-top: 4px; flex: none; }
.note-row { height: 54px; display: flex; align-items: flex-start; padding-left: 17px; }
.note-name { font-size: 18.500px; font-weight: 600; color: #111; margin-top: 13px; line-height: 26px; white-space: nowrap; width: 197px; }
.note-x { width: 16px; height: 16px; margin: 18px 0 0 1px; }
.date-lb { font-size: 11.500px; font-weight: 600; margin: 19px 0 0 204px; width: 33px; color: #444; }
.date-box { width: 122px; height: 31px; margin-top: 12px; border: 1px solid #c4c4c4; display: flex; align-items: center; justify-content: space-between; padding: 0 5px 0 6px; font-size: 17.500px; color: #444; }
.cal { width: 14px; height: 14px; }
.nbtn { display: flex; flex-direction: column; align-items: center; padding-top: 3px; font-size: 10.500px; color: #555; white-space: nowrap; }
.nbtn span { line-height: 14px; margin-top: 2px; }
.ni { width: 30px; height: 30px; }
.n1 { width: 60px; }
.n2 { width: 60px; }
.n3 { width: 56px; }
.n4 { width: 52px; }

.eval-list { margin: 0 7px; height: 424px; border: 1px solid #c9c9c9; display: flex; overflow: hidden; }
.eval-items { width: 790px; flex: none; height: 100%; overflow: hidden; padding-top: 1px; }
.ev { height: 50px; }
.ev-head { height: 25px; display: flex; align-items: flex-start; padding-left: 9px; }
.tri-open { width: 0; height: 0; border-style: solid; border-width: 0 0 7px 7px; border-color: transparent transparent #444 transparent; flex: none; }
.ev-head .tri-open { margin-top: 10px; }
.ev-name { width: 715px; height: 25px; margin-left: 4px; border-bottom: 1px solid #3569ad; font-size: 14.500px; font-weight: 600; line-height: 23px; color: #333; }
.ev-name.strong { color: #111; font-weight: 700; }
.q { width: 20px; height: 18px; margin: 3px 0 0 4px; position: relative; flex: none; background: linear-gradient(90deg, #f8f5a8 55%, #f5dfa0 55%); font-family: "Liberation Serif", serif; font-weight: 700; font-size: 20px; line-height: 22px; color: #333; text-align: right; padding-right: 2px; white-space: nowrap; border-radius: 2px; }
.q i { position: absolute; left: 3px; top: 2px; font-family: "Liberation Sans", sans-serif; font-style: normal; font-weight: 400; font-size: 7px; line-height: 18px; color: #555; }
.q::after { content: ""; position: absolute; left: 12px; top: 18px; border: 3px solid transparent; border-top: 3px solid #f5dfa0; }
.plus { width: 21px; height: 21px; margin: 3px 0 0 6px; }
.ev-body { height: 23px; margin-left: 40px; width: 748px; border-bottom: 1px solid #3569ad; }
.sb-eval { margin: 2px 0 1px 0; height: 419px; }

.assess { height: 302px; margin-top: 6px; flex: none; border-width: 1px 2px 3px 2px; }
.assess .p-head { height: 30px; padding-left: 7px; padding-right: 11px; }
.a-tools { height: 40px; display: flex; align-items: center; border-bottom: 2px solid #d8d8d8; font-size: 11px; white-space: nowrap; color: #444; }
.a-lb { text-align: right; line-height: 15px; }
.lb1 { width: 71px; }
.lb2 { width: 70px; }
.a-drop { width: 34px; height: 30px; border: 1px solid #ccc; margin-left: 5px; display: flex; align-items: center; gap: 3px; padding-left: 1px; color: #aaa; }
.a-drop.active { color: #3a7ac8; }
.a-ic { width: 16px; height: 16px; border: 1px solid currentColor; border-top-right-radius: 5px; text-align: center; font-family: "Liberation Serif", serif; font-size: 12px; line-height: 14px; flex: none; }
.caret { border: 4px solid transparent; border-top: 5px solid #444; border-bottom-width: 0; }
.box.big { width: 27px; height: 24px; flex: none; border-color: #555; }
.b1 { margin-left: 285px; }
.a-chk { color: #777; font-size: 13.300px; }
.l1 { width: 153px; margin-left: 3px; }
.l2 { width: 79px; margin-left: 2px; }
.refresh { width: 22px; height: 22px; }
.a-grid { display: flex; height: 228px; }
.a-exp { width: 16px; flex: none; position: relative; }
.tri-right { position: absolute; left: 6px; top: 12px; border: 4px solid transparent; border-left: 4px solid #333; border-right-width: 0; }
.a-rows { width: 786px; flex: none; font-size: 14px; margin-top: 1px; }
.a-sec { height: 31px; display: flex; align-items: center; gap: 3px; padding: 1px 0 0 21px; font-weight: 600; color: #333; border-bottom: 1px solid #ddd; font-size: 14.500px; }
.a-sec.tint { height: 30px; padding-top: 0; background: #edf4fd; }
.a-row { height: 31px; display: flex; border-bottom: 1px solid #d8d8d8; }
.a-name { width: 210px; padding: 6px 0 0 35px; border-right: 1px solid #d0d6de; font-size: 14.500px; }
.a-val { flex: 1; color: #111; line-height: 22px; font-size: 15px; }
.a-cmt { width: 46px; border: 2px solid #cdcdcd; border-right-width: 1px; display: flex; align-items: center; gap: 7px; padding-left: 6px; color: #aaa; background: #fff; }
.sb-assess { height: 227px; margin: 1px 0 0 2px; }

/* vertical tabs */
.vtabs { flex: 1; padding: 10px 0 0 7px; display: flex; flex-direction: column; }
.vtab { writing-mode: vertical-rl; font-size: 13px; color: #444; white-space: nowrap; }
.t1 { height: 76px; }
.t2 { height: 96px; }
```
